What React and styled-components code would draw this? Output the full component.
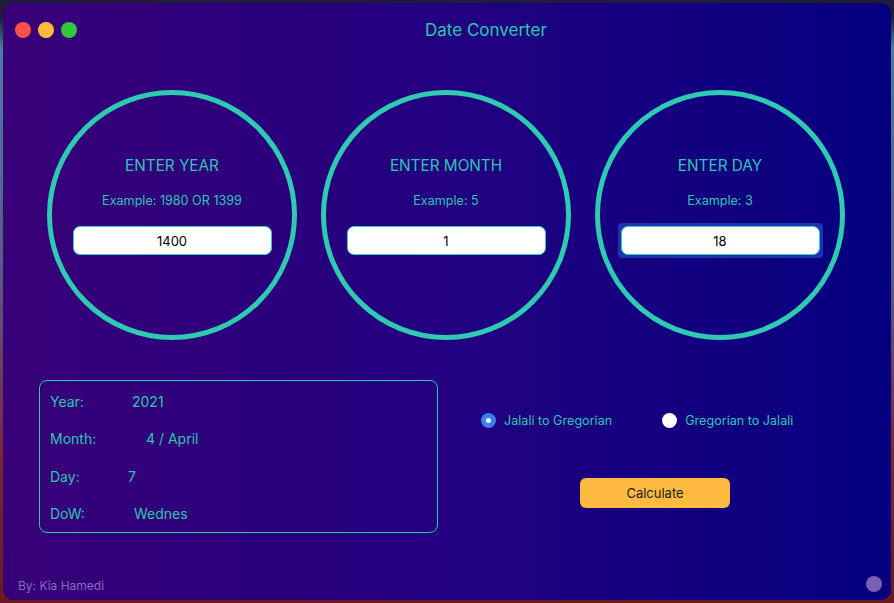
import React from "react";
import styled, { createGlobalStyle } from "styled-components";

const Global = createGlobalStyle`
  html, body { margin: 0; padding: 0; }
  body {
    width: 894px;
    height: 603px;
    overflow: hidden;
    font-family: Inter, "Noto Sans", sans-serif;
    background: linear-gradient(180deg, #1f1d38 0%, #1f1d38 3%, #4a7ea0 8%, #5a5a88 45%, #7a2638 75%, #6a1a1e 100%);
  }
  #root { padding: 3px; box-sizing: border-box; height: 603px; }
`;

const teal = "#2fc6b3";

const Window = styled.div`
  width: 888px;
  height: 597px;
  border-radius: 10px;
  background: linear-gradient(90deg, #380078 0%, #220080 50%, #05007f 100%);
  display: flex;
  flex-direction: column;
  overflow: hidden;
  box-sizing: border-box;
`;

const TitleBar = styled.div`
  height: 54px;
  display: flex;
  align-items: center;
  padding-left: 12px;
`;

const Lights = styled.div`
  display: flex;
  gap: 7px;
  width: 410px;
`;

const Light = styled.span`
  width: 16px;
  height: 16px;
  border-radius: 50%;
  background: ${(p) => p.$c};
`;

const Title = styled.div`
  color: ${teal};
  font-size: 17px;
`;

const CircleRow = styled.div`
  display: flex;
  gap: 24px;
  padding-left: 44px;
  margin-top: 33px;
`;

const Circle = styled.div`
  width: 250px;
  height: 250px;
  box-sizing: border-box;
  border: 5px solid #2ecab2;
  border-radius: 50%;
  display: flex;
  flex-direction: column;
  align-items: center;
  padding-top: 61px;
`;

const CircleTitle = styled.div`
  color: ${teal};
  font-size: 15.3px;
  line-height: 20px;
`;

const Example = styled.div`
  color: ${teal};
  font-size: 12.6px;
  line-height: 16px;
  margin-top: 17px;
`;

const InputFrame = styled.div`
  margin-top: 14px;
  padding: 3px;
  border-radius: 4px;
  background: ${(p) => (p.$focused ? "#1b33b4" : "transparent")};
  display: flex;
`;

const Input = styled.input`
  width: 199px;
  height: 29px;
  box-sizing: border-box;
  border: 1px solid #3cc8c0;
  border-radius: 7px;
  background: #fff;
  text-align: center;
  font-family: Inter, "Noto Sans", sans-serif;
  font-size: 13px;
  color: #000;
  outline: none;
  padding: 0;
`;

const Bottom = styled.div`
  display: flex;
  padding-left: 36px;
  margin-top: 40px;
  gap: 42px;
`;

const Results = styled.div`
  width: 399px;
  height: 153px;
  box-sizing: border-box;
  border: 1px solid ${teal};
  border-radius: 8px;
  padding: 2px 0 0 10px;
  display: flex;
  flex-direction: column;
`;

const Row = styled.div`
  height: 38px;
  display: flex;
  align-items: center;
  color: ${teal};
  font-size: 14px;
`;

const Label = styled.span`
  width: 78px;
`;

const Value = styled.span`
  padding-left: ${(p) => p.$x}px;
`;

const Side = styled.div`
  width: 350px;
  display: flex;
  flex-direction: column;
  align-items: center;
`;

const RadioRow = styled.div`
  align-self: stretch;
  display: flex;
  align-items: center;
  height: 20px;
  margin-top: 30px;
  padding-left: 1px;
  gap: 50px;
`;

const RadioItem = styled.label`
  display: flex;
  align-items: center;
  gap: 8px;
  color: ${teal};
  font-size: 12.6px;
`;

const RadioDot = styled.span`
  width: 15px;
  height: 15px;
  border-radius: 50%;
  box-sizing: border-box;
  background: ${(p) => (p.$on ? "#3a7ff6" : "#fff")};
  display: flex;
  align-items: center;
  justify-content: center;
  &::after {
    content: "";
    width: 5px;
    height: 5px;
    border-radius: 50%;
    background: #fff;
    display: ${(p) => (p.$on ? "block" : "none")};
  }
`;

const Button = styled.button`
  margin-top: 48px;
  width: 150px;
  height: 30px;
  border: none;
  border-radius: 6px;
  background: #ffbb40;
  color: #1d1a22;
  font-family: Inter, "Noto Sans", sans-serif;
  font-size: 13px;
  padding: 0;
`;

const Footer = styled.div`
  margin-top: auto;
  height: 30px;
  display: flex;
  align-items: center;
  justify-content: space-between;
  padding: 0 9px 0 15px;
`;

const Credit = styled.span`
  color: #866fbf;
  font-size: 12px;
`;

const Knob = styled.span`
  width: 16px;
  height: 16px;
  border-radius: 50%;
  background: #7a5db4;
  margin-bottom: 2px;
`;

const fields = [
  { title: "ENTER YEAR", example: "Example: 1980 OR 1399", value: "1400" },
  { title: "ENTER MONTH", example: "Example: 5", value: "1" },
  { title: "ENTER DAY", example: "Example: 3", value: "18", focused: true },
];

const results = [
  { label: "Year:", value: "2021", x: 4 },
  { label: "Month:", value: "4 / April", x: 18 },
  { label: "Day:", value: "7", x: 0 },
  { label: "DoW:", value: "Wednes", x: 6 },
];

export default function App() {
  return (
    <>
      <Global />
      <Window>
        <TitleBar>
          <Lights>
            <Light $c="#fe4f4a" />
            <Light $c="#febb3e" />
            <Light $c="#2fc83b" />
          </Lights>
          <Title>Date Converter</Title>
        </TitleBar>
        <CircleRow>
          {fields.map((f) => (
            <Circle key={f.title}>
              <CircleTitle>{f.title}</CircleTitle>
              <Example>{f.example}</Example>
              <InputFrame $focused={f.focused}>
                <Input defaultValue={f.value} readOnly />
              </InputFrame>
            </Circle>
          ))}
        </CircleRow>
        <Bottom>
          <Results>
            {results.map((r) => (
              <Row key={r.label}>
                <Label>{r.label}</Label>
                <Value $x={r.x}>{r.value}</Value>
              </Row>
            ))}
          </Results>
          <Side>
            <RadioRow>
              <RadioItem>
                <RadioDot $on />
                Jalali to Gregorian
              </RadioItem>
              <RadioItem>
                <RadioDot />
                Gregorian to Jalali
              </RadioItem>
            </RadioRow>
            <Button>Calculate</Button>
          </Side>
        </Bottom>
        <Footer>
          <Credit>By: Kia Hamedi</Credit>
          <Knob />
        </Footer>
      </Window>
    </>
  );
}
